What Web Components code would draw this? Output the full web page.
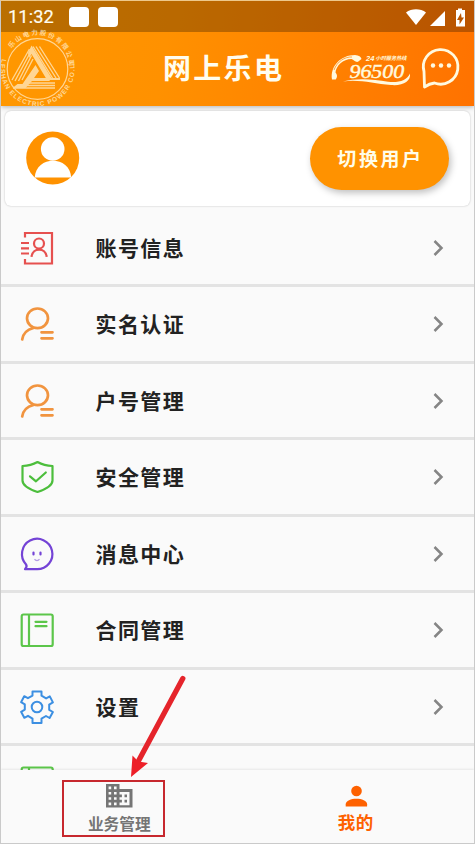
<!DOCTYPE html>
<html lang="zh-CN">
<head>
<meta charset="utf-8">
<title>网上乐电</title>
<style>
html,body{margin:0;height:100%;overflow:hidden}
body{font-family:"Noto Sans CJK SC",sans-serif;color:#222}
</style>
</head>
<body>
<phone-screen></phone-screen>
<script>
const define = (name, html) => customElements.define(name, class extends HTMLElement {
  constructor() {
    super();
    this.attachShadow({mode: 'open'}).innerHTML = typeof html === 'function' ? html(this) : html;
  }
});

const icons = {
  account: `<g stroke="#e6504f" stroke-width="2.200"><path d="M5 6.500V2h27v30.500H5V28M1 12h8M1 17.300h8M1 22.500h8"/><circle cx="19" cy="12.500" r="5"/><path d="M11.500 25.800c1.200-9.500 14-9.500 15.200 0"/></g>`,
  person: `<g stroke="#f1943f" stroke-width="2.700" stroke-linecap="round"><ellipse cx="17.500" cy="11.300" rx="10.500" ry="9.800"/><path d="M13.500 21C7.500 22.500 3 26.500 2.200 32.500M21.500 25.300h11M21.500 31.300h11"/></g>`,
  shield: `<g transform="translate(.5 -.5)" stroke="#4cbe3c" stroke-width="2.200" stroke-linejoin="round" stroke-linecap="round"><path d="M17 2.500C12.500 5 7.500 6.300 2 6.500V21c0 5.200 9 9.500 15 11.500 6-2 15-6.300 15-11.500V6.500C26.500 6.300 21.500 5 17 2.500z"/><path d="M9.500 16.800l6 5L25.300 13"/></g>`,
  message: `<path stroke="#7443d6" stroke-width="2.200" stroke-linejoin="round" d="M5 32.200c1.800-2 2.300-3.300.9-5A15.200 15.200 0 1 1 17 32.200H5z"/><path stroke="#7443d6" stroke-width="2.200" stroke-linecap="round" d="M13.500 15.500v2M20.500 15.500v2"/><path stroke="#b49ce5" stroke-width="1.200" d="M14.500 22.200c1.200 1.800 3.800 1.800 5 0"/>`,
  book: `<g stroke="#5cc64a" stroke-width="2.200"><rect x="1.700" y="1.500" width="31" height="31.500" rx="1.800"/><path d="M9 2v30.500"/><path stroke-linecap="round" d="M15.500 8.800h11M15.500 13.200h11"/></g>`,
  gear: `<path stroke="#3c8fe2" stroke-width="2" stroke-linejoin="round" d="M12.500 1.500h9v4.200l4.600 2.700 3.700-2 3.100 6-3.700 2.200v5.200l3.700 2.200-3.300 6-3.600-2-4.500 2.600v4.300h-9v-4.300L8 25.800l-3.700 2-3.200-6 3.700-2.200v-5.200l-3.700-2.200 3.100-6 3.700 2 4.600-2.600z"/><circle cx="17" cy="17" r="5.300" stroke="#3c8fe2" stroke-width="2"/>`
};

define('status-bar', `
<style>
:host{display:flex;align-items:center;height:32px;box-sizing:border-box;padding:0 7px 0 7px;background:rgba(0,0,0,.27);color:#fffdf0}
time{font:18.200px/28px Roboto,sans-serif;width:61px;letter-spacing:.1px;-webkit-text-stroke:.2px #fffdf0}
i{width:20px;height:20px;border-radius:4px;background:#fff;margin-right:9px}
svg{margin-left:auto;overflow:visible}
</style>
<time>11:32</time><i></i><i></i>
<svg width="62" height="20" viewBox="0 0 62 20" fill="#fff"><path d="M1 5.500C6.500 1.200 15.500 1.200 21 5.500L11 18z"/><path d="M25 19L40 4v15z"/><path fill-rule="evenodd" d="M53 3V1.500h4V3h3v16.500h-9V3zM56 6l-4 7h2.500v4.500L59 10.500h-2.500z"/></svg>`);

define('company-logo', `
<style>:host{display:block;width:78px;height:74px}svg{display:block;overflow:visible}</style>
<svg width="78" height="74" viewBox="0 0 78 74" fill="none" opacity=".68">
<defs><path id="upper" d="M5.800 42.500A31.700 31.700 0 1 1 67.200 42.500"/><path id="lower" d="M1.200 26A37 37 0 1 0 71.800 26"/></defs>
<circle cx="36.500" cy="37" r="30.300" stroke="#fff5db" stroke-width="1.200"/>
<g fill="#fff5db" font-weight="700">
<text font-family="Noto Sans CJK SC,sans-serif" font-size="6.500"><textPath href="#upper" startOffset="27" textLength="80">乐山电力股份有限公司</textPath></text>
<text font-family="Liberation Sans,sans-serif" font-size="6.500"><textPath href="#lower" startOffset="1" textLength="141">LESHAN ELECTRIC POWER CO.LTD</textPath></text>
</g>
<g fill="#fff5db"><path d="M30.500 13.500L50.500 46H59v2H46L30.500 22 28 26l-1-5z"/><path d="M34.500 33l3.500 6-5 7h14l2 3H31l-6.500 7h-13l5-4h5z"/></g>
<g stroke="#fff5db" stroke-width="1.350"><path d="M35 14.500l20 31.500M38.500 14.500L58.500 46M32 14.500l19.500 31.500M28.500 17L11 48M29.500 20L14 49M30.500 23.500L17.500 49M32 27L21 48M24 51h30M22 53.500h32M12 56h42"/></g>
</svg>`);

define('hotline-mark', `
<style>:host{display:block;width:82px;height:36px}svg{display:block;overflow:visible}</style>
<svg width="82" height="36" viewBox="0 0 82 36" fill="#fff9df">
<path d="M1 26.500C-1 13 10 2 24 2c4 .2 6 2 6.500 4L27 8.800c-2.700.7-4-2-6.500-2.800C12 6 5 13 4.500 19.500c1.500 1.700 2.400 4 .2 7z"/>
<path d="M3 17C6 8.500 14 3.500 21 4" fill="none" stroke="#ff8100" stroke-width=".7"/>
<text x="35" y="7.500" font-family="Liberation Sans,sans-serif" font-size="7.500" font-style="italic" font-weight="700">24</text>
<text x="44.500" y="7" font-family="Noto Sans CJK SC,sans-serif" font-size="5.200" font-style="italic" font-weight="700" textLength="31">小时服务热线</text>
<text transform="translate(18.500 24.500) scale(1.190 1)" font-family="Liberation Serif,serif" font-size="18.500" font-style="italic" stroke="#fff9df" stroke-width=".45" textLength="46" lengthAdjust="spacing">96500</text>
<path d="M12 28.500c13-3.500 30-2.500 45 .3 11 1.200 19-1.500 22-8.300 1 8-7 12.500-19 11.500C43 31 29 26 12 28.500z"/>
</svg>`);

define('app-header', `
<style>
:host{display:grid;grid-template-columns:132px 1fr 143px;height:73.500px}
h1{margin:0;padding-left:30px;font:700 28px/71px "Noto Sans CJK SC",sans-serif;letter-spacing:2.300px;color:#fffdf0;white-space:nowrap}
div{display:flex;padding-top:18px}
hotline-mark{margin-top:3px}
svg{margin:-3px 0 0 7px}
</style>
<company-logo></company-logo><h1>网上乐电</h1>
<div><hotline-mark></hotline-mark><svg width="42" height="44" viewBox="0 0 42 44" fill="none"><path d="M4.500 40L4 24.500A17.300 17.300 0 1 1 14.500 36q-5 .5-10 4z" stroke="#fff9df" stroke-width="2.800" stroke-linejoin="round"/><g fill="#fff9df"><circle cx="13" cy="18.500" r="2.200"/><circle cx="21" cy="18.500" r="2.200"/><circle cx="29" cy="18.500" r="2.200"/></g></svg></div>`);

define('user-card', `
<style>
:host{display:flex;align-items:center;justify-content:space-between;box-sizing:border-box;height:95px;margin:5.500px 4px 0;padding:0 21.500px 0 20.500px;background:#fff;border-radius:6px;box-shadow:0 0 2px rgba(0,0,0,.25)}
button{width:139px;height:63px;border:0;border-radius:32px;padding:0 0 3px 3px;background:#ff9200;color:#fffde9;font:700 19px "Noto Sans CJK SC",sans-serif;letter-spacing:2.600px;box-shadow:2px 3px 7px rgba(0,0,0,.25)}
svg{margin-top:-1px}
</style>
<svg width="54" height="54" viewBox="0 0 54 54"><circle cx="26.700" cy="27" r="26.500" fill="#ff9200"/><g fill="#fff"><circle cx="26.700" cy="18" r="11.800"/><path d="M8.700 46.500C10 24 44 24 45.200 46.500z"/></g></svg>
<button><slot></slot></button>`);

define('menu-row', el => `
<style>
:host{display:flex;align-items:center;height:76.500px;box-sizing:border-box;border-bottom:3px solid #e3e3e3;padding:1px 30.500px 0 19px;font-weight:700;font-size:21px;letter-spacing:1.400px;line-height:30px}
svg{flex:none;overflow:visible}
span{flex:1;margin-left:41.500px;padding-bottom:2px}
</style>
<svg width="34" height="34" viewBox="0 0 34 34" fill="none">${icons[el.getAttribute('icon')]}</svg>
<span><slot></slot></span>
<svg width="12" height="16" viewBox="0 0 12 16" fill="none"><path d="M2.500 1l7 7-7 7" stroke="#858585" stroke-width="2.500"/></svg>`);

define('nav-item', `
<style>
:host{display:flex;flex-direction:column;align-items:center;flex:1;padding-top:13px;font-weight:700}
</style>
<slot name="icon"></slot><slot></slot>`);

define('bottom-nav', `
<style>
:host{display:flex;height:73.500px;flex:none;background:#fafafa;box-shadow:0 -1px 2px rgba(0,0,0,.08);position:relative}
svg{display:block}
.business{color:#757575;font-size:15.700px;line-height:24px}
.mine{color:#fe6100;font-size:17.500px;line-height:25px;letter-spacing:.5px}
.mine svg{margin-bottom:0}
.business svg{margin-bottom:3.500px}
</style>
<nav-item class="business"><svg slot="icon" width="28" height="26" viewBox="0 0 28 26"><path fill="#757575" fill-rule="evenodd" d="M1 1h13.500v5H27.500v18.500H1zM3.600 3.600v2.600h2.600V3.600zm5.400 0v2.600h2.600V3.600zM3.600 9v2.500h2.600V9zM9 9v2.500h2.600V9zm-5.400 5.200v2.500h2.600v-2.500zm5.400 0v2.500h2.600v-2.500zM3.600 19.500v2.700h2.600v-2.700zm5.400 0v2.700h2.600v-2.700zM14.500 9v2.500h2.400v2.700h-2.400v2.500h2.400v2.800h-2.400v2.700h10V9zM19.500 11.500h2.500v2.700h-2.500zm0 5.200h2.500v2.800h-2.500z"/></svg>业务管理</nav-item>
<nav-item class="mine"><svg slot="icon" width="24" height="26" viewBox="0 0 24 26" fill="#fe6100"><circle cx="12.500" cy="8" r="5.300"/><path d="M1.700 23.500v-2.200c0-7.500 21.400-7.500 21.400 0v2.200z"/></svg>我的</nav-item>`);

define('pointer-note', `
<style>:host{position:absolute;left:59px;top:673px;width:130px;height:166px;pointer-events:none}svg{display:block}</style>
<svg width="130" height="166" viewBox="0 0 130 166"><rect x="3" y="107" width="101" height="55" fill="none" stroke="#c7282e" stroke-width="2"/><path d="M122.800 4.500L79 86" stroke="#e5242b" stroke-width="5.300" stroke-linecap="round"/><path fill="#ed1f28" d="M71 103l1.500-21.500 6 6 9.500 1.500z"/></svg>`);

define('phone-screen', `
<style>
:host{display:flex;flex-direction:column;position:relative;box-sizing:border-box;width:475px;height:844px;border:1px solid #cacaca;border-top-color:#edc88b;background:#fafafa;overflow:hidden}
.top{flex:none;background:linear-gradient(100deg,#ff9800,#ff9100 35%,#ff7200);box-shadow:0 1px 5px rgba(0,0,0,.3);margin-top:-1px;padding-top:1px;box-sizing:border-box;height:105.500px}
status-bar{height:31px}
main{flex:1;min-height:0;overflow:hidden}
.list{padding-top:4.500px}
</style>
<div class="top"><status-bar></status-bar><app-header></app-header></div>
<main><user-card>切换用户</user-card>
<div class="list">
<menu-row icon="account">账号信息</menu-row>
<menu-row icon="person">实名认证</menu-row>
<menu-row icon="person">户号管理</menu-row>
<menu-row icon="shield">安全管理</menu-row>
<menu-row icon="message">消息中心</menu-row>
<menu-row icon="book">合同管理</menu-row>
<menu-row icon="gear">设置</menu-row>
<menu-row icon="book"></menu-row>
</div></main>
<bottom-nav></bottom-nav>
<pointer-note></pointer-note>`);
</script>
</body>
</html>
